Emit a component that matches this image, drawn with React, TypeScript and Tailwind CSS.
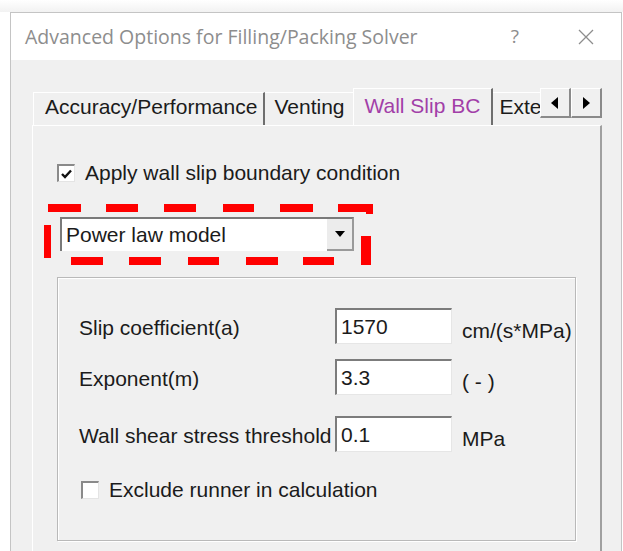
import React from "react";

const sans = { fontFamily: '"Liberation Sans", Arial, sans-serif' };
const uiFont = { fontFamily: '"Open Sans", "Noto Sans", sans-serif' };

function CheckBox({ checked }: { checked?: boolean }) {
  return (
    <div className="w-[18px] h-[18px] bg-white border-t-2 border-l-2 border-[#8a8a8a] border-b border-r border-b-[#e4e4e4] border-r-[#e4e4e4] flex items-center justify-center shrink-0">
      {checked && (
        <svg width="11" height="10" viewBox="0 0 11 10">
          <path d="M1 5 L4 8 L10 1.5" fill="none" stroke="#111" strokeWidth="2.4" />
        </svg>
      )}
    </div>
  );
}

function Field({ value }: { value: string }) {
  return (
    <div className="w-[117px] h-[36px] bg-white border-t-2 border-l-2 border-[#7c7c7c] border-b border-r border-b-[#e6e6e6] border-r-[#e6e6e6] flex items-center pl-[4px] text-[21px] leading-[24px] text-[#1b1b1b] shrink-0">
      {value}
    </div>
  );
}

function ParamRow({ label, value, unit, className }: { label: string; value: string; unit: string; className?: string }) {
  return (
    <div className={"flex items-center h-[36px] " + (className ?? "")}>
      <span className="w-[256px] pt-[4px] text-[21px] leading-[24px] text-[#1b1b1b] whitespace-nowrap">{label}</span>
      <Field value={value} />
      <span className="ml-[10px] pt-[10px] text-[21px] leading-[24px] text-[#1b1b1b] whitespace-nowrap">{unit}</span>
    </div>
  );
}

// hand-drawn highlight around the model selector
function DashFrame() {
  const top = [[4, 33], [62, 32], [120, 32], [179, 31], [236, 33], [294, 35]];
  const bottom = [[27, 32], [85, 32], [144, 31], [202, 32], [259, 31]];
  return (
    <svg className="absolute left-[11px] top-[78px] pointer-events-none" width="330" height="62" viewBox="0 0 330 62">
      {top.map(([x, w]) => (
        <rect key={"t" + x} x={x} y={0} width={w} height={8} fill="#ff0000" />
      ))}
      {bottom.map(([x, w]) => (
        <rect key={"b" + x} x={x} y={53} width={w} height={8} fill="#ff0000" />
      ))}
      <rect x={0} y={21} width={7} height={33} fill="#ff0000" />
      <rect x={317} y={32} width={10} height={29} fill="#ff0000" />
      <rect x={322} y={0} width={7} height={10} fill="#ff0000" />
    </svg>
  );
}

export default function App() {
  return (
    <div className="w-[623px] h-[551px] overflow-hidden bg-white" style={sans}>
      <div className="h-[12px] bg-gradient-to-b from-white to-[#f2f2f2]" />
      <div className="ml-[10px] w-[612px] h-[539px] border-t border-l border-r border-[#c4c4c4] flex flex-col">
        {/* title bar */}
        <div className="h-[47px] bg-white flex items-center shrink-0">
          <span className="pl-[14px] text-[19.5px] text-[#8d8d8d] whitespace-nowrap" style={uiFont}>
            Advanced Options for Filling/Packing Solver
          </span>
          <span className="ml-auto text-[19px] text-[#8d8d8d]" style={uiFont}>
            ?
          </span>
          <svg className="ml-[59px] mr-[27px]" width="16" height="16" viewBox="0 0 16 16">
            <path d="M1 1 L15 15 M15 1 L1 15" stroke="#8d8d8d" strokeWidth="1.3" />
          </svg>
        </div>

        {/* dialog body */}
        <div className="flex-1 bg-[#f0f0f0] pl-[21px] pt-[28px]">
          {/* tab strip */}
          <div className="w-[570px] h-[37px] flex">
            <div className="flex-1 overflow-hidden flex items-end">
              <div className="h-[33px] flex items-center pb-[5px] pl-[11px] pr-[6px] border-t border-l border-white border-r-2 border-r-[#6e6e6e] text-[21px] text-[#1b1b1b] whitespace-nowrap shrink-0 ml-[1px]">
                Accuracy/Performance
              </div>
              <div className="h-[33px] flex items-center pb-[5px] pl-[9px] border-t border-white text-[21px] text-[#1b1b1b] whitespace-nowrap shrink-0 w-[88px]">
                Venting
              </div>
              <div className="h-[37px] flex items-center pb-[3px] pl-[10px] border-t border-l border-white border-r-2 border-r-[#6e6e6e] text-[21px] text-[#a23fa8] whitespace-nowrap shrink-0 w-[140px] bg-[#f0f0f0]">
                Wall Slip BC
              </div>
              <div className="h-[33px] flex items-center pb-[5px] pl-[6px] border-t border-white text-[21px] text-[#1b1b1b] whitespace-nowrap shrink-0">
                External
              </div>
            </div>
            <div className="flex h-[30px] shrink-0">
              <div className="w-[31px] h-[30px] bg-[#f0f0f0] border-t border-l border-white border-r-2 border-b-2 border-r-[#8a8a8a] border-b-[#8a8a8a] flex items-center justify-center">
                <svg width="8" height="12" viewBox="0 0 8 12">
                  <path d="M7 0 L0 6 L7 12 Z" fill="#000" />
                </svg>
              </div>
              <div className="w-[31px] h-[30px] bg-[#f0f0f0] border-t border-l border-white border-r-2 border-b-2 border-r-[#8a8a8a] border-b-[#8a8a8a] flex items-center justify-center">
                <svg width="8" height="12" viewBox="0 0 8 12">
                  <path d="M1 0 L8 6 L1 12 Z" fill="#000" />
                </svg>
              </div>
            </div>
          </div>

          {/* tab page */}
          <div className="relative w-[570px] h-[440px] border-t border-l border-white border-r-2 border-r-[#a0a0a0] pl-[24px] pt-[35px]">
            <div className="flex items-center h-[24px]">
              <CheckBox checked />
              <span className="ml-[10px] text-[21px] text-[#1b1b1b] whitespace-nowrap">Apply wall slip boundary condition</span>
            </div>

            <div className="ml-[3px] mt-[32px] w-[294px] h-[34px] bg-white border-t-2 border-l-2 border-[#7a7a7a] border-r-2 border-r-[#9a9a9a] flex">
              <span className="flex-1 flex items-center pl-[4px] text-[21px] text-[#1b1b1b] whitespace-nowrap">Power law model</span>
              <div className="w-[25px] h-full bg-[#ececec] border-b-2 border-[#9a9a9a] flex items-center justify-center">
                <svg width="10" height="6" viewBox="0 0 10 6">
                  <path d="M0 0 L10 0 L5 6 Z" fill="#000" />
                </svg>
              </div>
            </div>

            <DashFrame />

            {/* parameter group */}
            <div className="mt-[26px] w-[519px] h-[264px] border border-[#b9b9b9] shadow-[inset_1px_1px_0_#ffffff,1px_1px_0_#ffffff] pl-[21px] pt-[30px]">
              <ParamRow label="Slip coefficient(a)" value="1570" unit="cm/(s*MPa)" />
              <ParamRow label="Exponent(m)" value="3.3" unit="( - )" className="mt-[15px]" />
              <ParamRow label="Wall shear stress threshold" value="0.1" unit="MPa" className="mt-[21px]" />
              <div className="flex items-center h-[24px] mt-[26px] ml-[2px]">
                <CheckBox />
                <span className="ml-[10px] text-[21px] text-[#1b1b1b] whitespace-nowrap">Exclude runner in calculation</span>
              </div>
            </div>
          </div>
        </div>
      </div>
    </div>
  );
}
